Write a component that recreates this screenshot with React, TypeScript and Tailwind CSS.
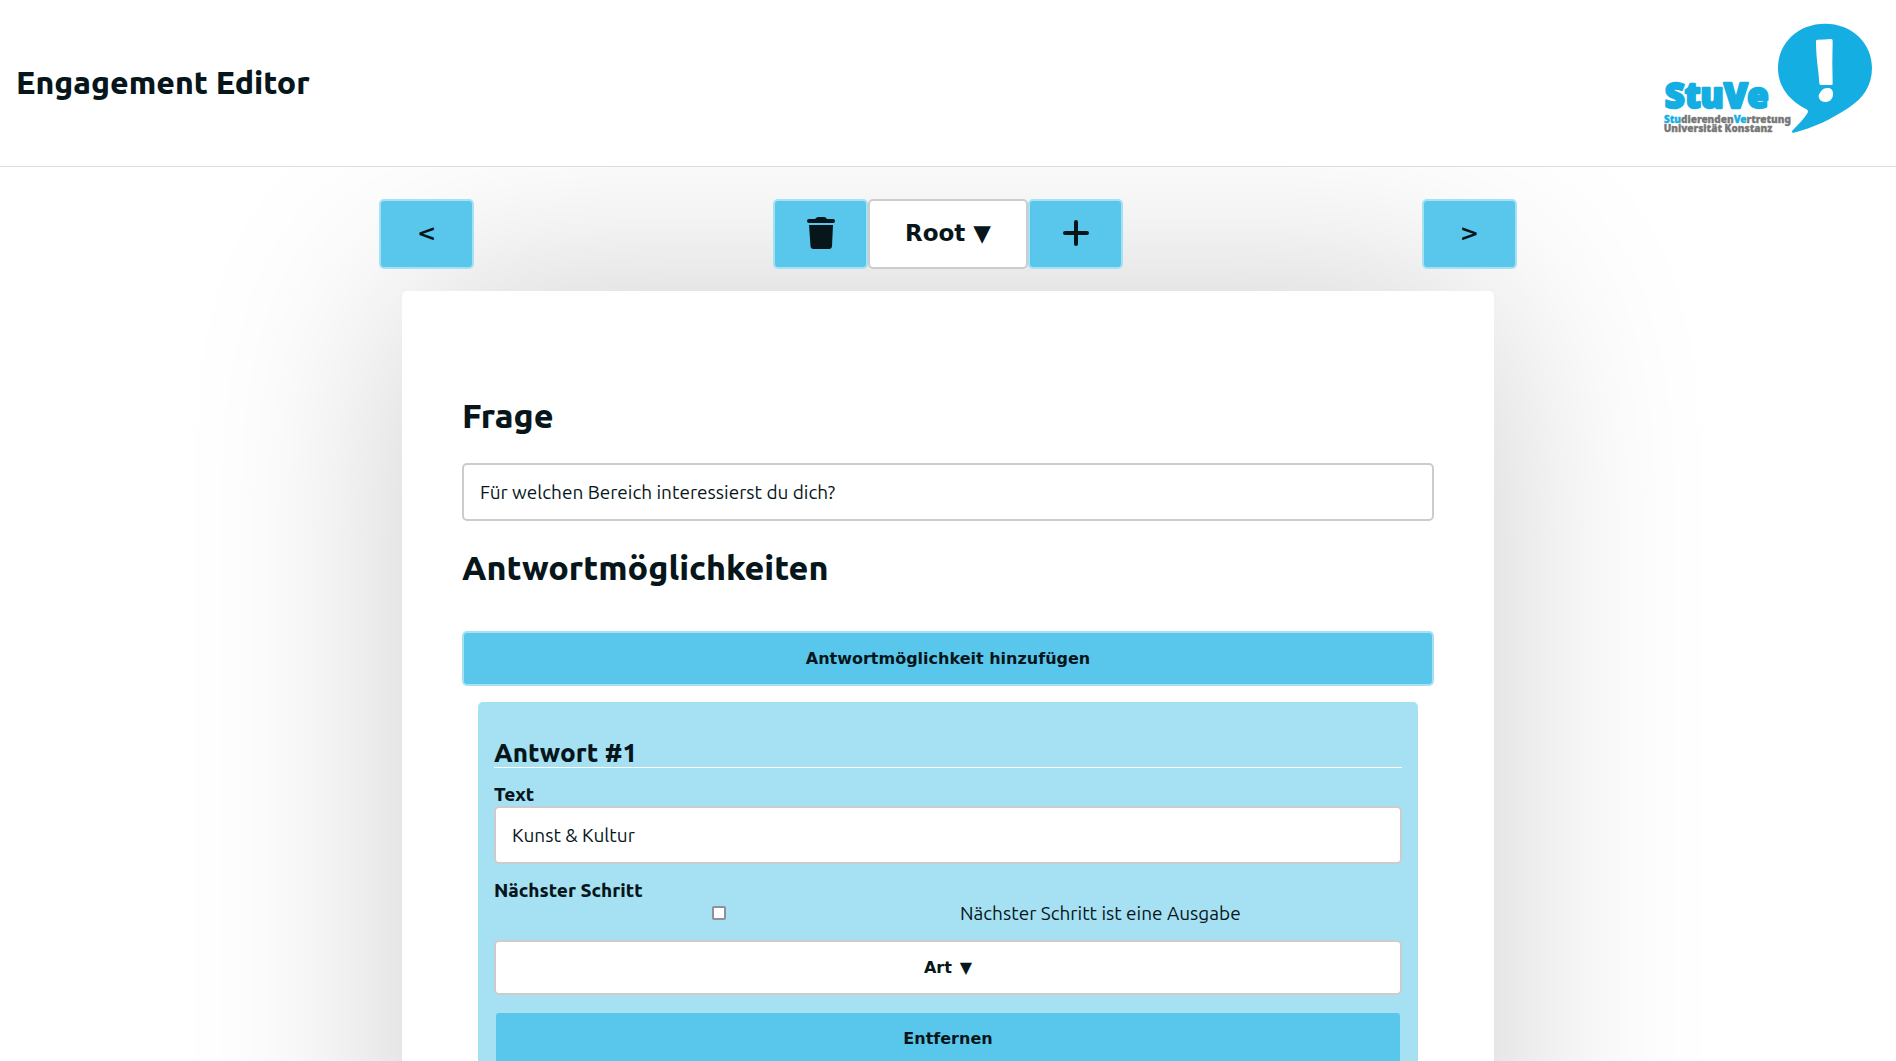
import React, { useState } from "react";

const primaryButton =
  "flex items-center justify-center rounded-[5px] border-2 border-[#a6e1f3] bg-[#59c7ec] font-bold text-[#06161b] [font-family:'DejaVu_Sans',sans-serif]";
const plainButton =
  "flex items-center justify-center gap-2 rounded-[5px] border-2 border-[#cccccc] bg-white font-bold text-[#06161b] [font-family:'DejaVu_Sans',sans-serif]";
const textField =
  "block h-[58px] w-full rounded-[5px] border-2 border-[#cccccc] bg-white px-4 text-[19px] text-[#06161b]";

function Logo() {
  return (
    <svg
      viewBox="48 48 672 402"
      className="h-[134px] w-[224px]"
      role="img"
      aria-label="StuVe"
    >
      <path
        fill="#15aee3"
        d="M555 71C634 71 696 127 696 204C696 258 668 296 626 323C572 358 523 382 462 398Q452 399 458 391C474 374 494 354 503 338Q506 331 498 327C447 301 414 259 414 204C414 127 476 71 555 71Z"
      />
      <path
        fill="#fff"
        d="M532 119Q552 119 573 117Q578 117 578 122Q576 190 578 251Q578 256 573 255L542 255Q538 255 538 250C536 210 528 178 528 124Q528 119 532 119Z"
      />
      <path
        fill="#fff"
        d="M566 264C576 266 580 274 579 284C578 298 568 306 555 306C544 305 536 298 536 287C537 281 541 279 543 274C547 266 557 263 566 264Z"
      />
      <g fontFamily="'Noto Sans', sans-serif" fontWeight="900" strokeLinejoin="round">
        <text x="74" y="324" fontSize="104" fill="#15aee3" stroke="#15aee3" strokeWidth="7">
          StuVe
        </text>
        <text x="72" y="369" fontSize="30" fill="#777" stroke="#777" strokeWidth="1">
          <tspan fill="#15aee3" stroke="#15aee3">Stu</tspan>dierenden
          <tspan fill="#15aee3" stroke="#15aee3">Ve</tspan>rtretung
        </text>
        <text x="71" y="395" fontSize="30" fill="#777" stroke="#777" strokeWidth="1">
          Universität Konstanz
        </text>
      </g>
    </svg>
  );
}

function TrashIcon() {
  return (
    <svg viewBox="0 0 28 32" className="h-8 w-7" fill="currentColor" aria-hidden="true">
      <path d="M2 2H8Q9.500 0 11.500 0H17Q19 0 20 2H26Q28 2 28 4T26 6H2Q0 6 0 4T2 2Z" />
      <path d="M2 8H26L25 29Q24.800 32 22 32H6.500Q3.700 32 3.500 29Z" />
    </svg>
  );
}

function PlusIcon() {
  return (
    <svg
      viewBox="0 0 26 26"
      className="size-[26px]"
      stroke="currentColor"
      strokeWidth="4"
      strokeLinecap="round"
      aria-hidden="true"
    >
      <path d="M13 2V24M2 13H24" />
    </svg>
  );
}

function Toolbar() {
  return (
    <nav className="mx-auto flex w-3/5 justify-between text-[23px]">
      <button type="button" className={`${primaryButton} h-[70px] w-[95px] pb-0.5`} aria-label="Zurück">
        &lt;
      </button>
      <div className="flex">
        <button type="button" className={`${primaryButton} h-[70px] w-[95px] pb-0.5`} aria-label="Löschen">
          <TrashIcon />
        </button>
        <button type="button" className={`${plainButton} h-[70px] w-40 pb-0.5`}>
          <span>Root</span>
          <span>▼</span>
        </button>
        <button type="button" className={`${primaryButton} h-[70px] w-[95px] pb-0.5`} aria-label="Neu">
          <PlusIcon />
        </button>
      </div>
      <button type="button" className={`${primaryButton} h-[70px] w-[95px] pb-0.5`} aria-label="Weiter">
        &gt;
      </button>
    </nav>
  );
}

function Answer({ number, initialText }: { number: number; initialText: string }) {
  const [text, setText] = useState(initialText);
  const [isOutput, setIsOutput] = useState(false);
  return (
    <section className="mx-4 mt-4 rounded-[5px] bg-[#a6e1f3] px-4 pt-8 pb-4">
      <h3 className="border-b border-white pt-1 text-[26px] leading-[29px] font-extrabold">
        Antwort #{number}
      </h3>
      <label
        htmlFor="answer-text"
        className="mt-4 block pb-0.5 text-[19px] leading-5 font-extrabold"
      >
        Text
      </label>
      <input
        id="answer-text"
        className={textField}
        value={text}
        onChange={(e) => setText(e.target.value)}
      />
      <h4 className="mt-4 pb-0.5 text-[19px] leading-5 font-extrabold">Nächster Schritt</h4>
      <div className="flex h-[22px] items-center">
        <div className="flex w-[450px] justify-center">
          <input
            id="is-output"
            type="checkbox"
            className="size-[14px] appearance-none rounded-[2px] border-2 border-[#8f8f9d] bg-white checked:bg-[#15aee3]"
            checked={isOutput}
            onChange={(e) => setIsOutput(e.target.checked)}
          />
        </div>
        <label htmlFor="is-output" className="pl-4 text-[19px] leading-[22px]">
          Nächster Schritt ist eine Ausgabe
        </label>
      </div>
      <button type="button" className={`${plainButton} mt-4 h-[55px] w-full text-base`}>
        <span>Art</span>
        <span>▼</span>
      </button>
      <button type="button" className={`${primaryButton} mt-4 h-[55px] w-full text-base`}>
        Entfernen
      </button>
    </section>
  );
}

export default function App() {
  const [question, setQuestion] = useState("Für welchen Bereich interessierst du dich?");
  return (
    <div className="h-screen overflow-x-hidden overflow-y-auto bg-white text-[#06161b] [font-family:Ubuntu,'Noto_Sans',sans-serif] [scrollbar-width:none]">
      <header className="relative z-10 flex items-center justify-between border-b border-[#dddddd] bg-white p-4">
        <h1 className="pb-0.5 text-[32px] font-extrabold">Engagement Editor</h1>
        <Logo />
      </header>
      <main className="pt-8">
        <div className="relative z-10">
          <Toolbar />
        </div>
        <div className="mx-auto mt-[22px] w-3/5">
          <div className="mx-auto w-[96%] rounded-[5px] bg-white px-[60px] pt-[104px] pb-96 shadow-[0_0_216px_rgba(0,0,0,0.2)]">
            <h2 className="text-[34px] leading-[40px] font-extrabold">
              <label htmlFor="question">Frage</label>
            </h2>
            <input
              id="question"
              className={`${textField} mt-7`}
              value={question}
              onChange={(e) => setQuestion(e.target.value)}
            />
            <h2 className="mt-[26px] text-[34px] leading-[40px] font-extrabold">
              Antwortmöglichkeiten
            </h2>
            <button type="button" className={`${primaryButton} mt-11 h-[55px] w-full text-base`}>
              Antwortmöglichkeit hinzufügen
            </button>
            <Answer number={1} initialText="Kunst & Kultur" />
          </div>
        </div>
      </main>
    </div>
  );
}
